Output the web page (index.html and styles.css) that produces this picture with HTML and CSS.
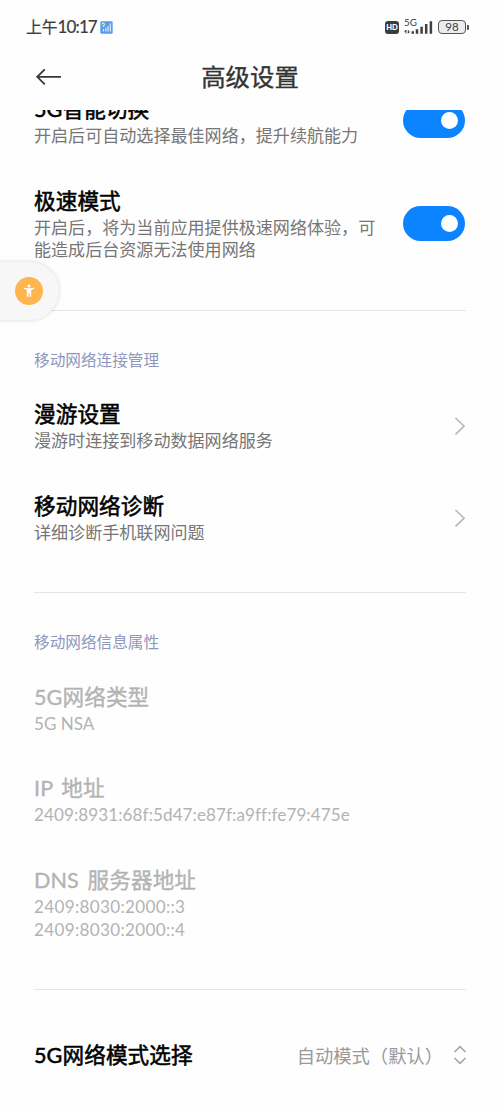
FILE: index.html
```html
<!DOCTYPE html>
<html lang="zh-CN">
<head>
<meta charset="utf-8">
<title>高级设置</title>
<link rel="stylesheet" href="styles.css">
</head>
<body>
<div class="phone">
  <div class="status">
    <span class="clock">上午<span class="clock-num">10:17</span></span>
    <svg class="sim" width="13" height="13" viewBox="0 0 13 13"><rect x=".3" y=".3" width="12.4" height="12.4" rx="1.2" fill="#5b9cec"/><path d="M1.8 3.4q.2-1.3 1.4-1.3t1.3 1.2q0 .9-1.2 1.7v1" fill="none" stroke="#e4ef9a" stroke-width="1.1"/><path d="M3.4 8v2.5M5.8 7v3.5M8 5v5.5M10.3 2.5v8" stroke="#e4f0ff" stroke-width="1.1"/></svg>
    <span class="spacer"></span>
    <span class="hd">HD</span>
    <span class="signal">
      <span class="net">5G</span>
      <svg width="29" height="16" viewBox="0 0 29 16"><path d="M1.900 14.500v-3M.8 12.600l1.100-1.400v1.400zM4.300 11v3M5.400 12.800l-1.100 1.400v-1.400z" stroke="#444" stroke-width=".9" fill="#444"/><path d="M8.800 12.300v2.400M13 10.300v4.400M17.600 7.800v6.900M22.200 5v9.700M26.900 2.200v12.500" stroke="#404040" stroke-width="2.5"/></svg>
    </span>
    <span class="battery"><span class="battery-body">98</span><span class="battery-tip"></span></span>
  </div>
  <header class="bar">
    <svg class="back" width="26" height="18" viewBox="0 0 26 18"><path d="M26 8.800H2M9.800 1.300L2.200 8.800l7.600 7.500" fill="none" stroke="#383838" stroke-width="1.8"/></svg>
    <h1 class="heading">高级设置</h1>
  </header>
  <main class="list">
    <div class="row row-first">
      <div class="text"><div class="title">5G智能切换</div><div class="desc">开启后可自动选择最佳网络，提升续航能力</div></div>
      <span class="toggle"></span>
    </div>
    <div class="row">
      <div class="text"><div class="title">极速模式</div><div class="desc">开启后，将为当前应用提供极速网络体验，可能造成后台资源无法使用网络</div></div>
      <span class="toggle"></span>
    </div>
    <hr class="rule">
    <h2 class="section">移动网络连接管理</h2>
    <div class="row">
      <div class="text"><div class="title">漫游设置</div><div class="desc">漫游时连接到移动数据网络服务</div></div>
      <svg class="chevron" width="12" height="18" viewBox="0 0 12 18"><path d="M1.500 1l8.600 8.200-8.600 8.200" fill="none" stroke="#b8b8b8" stroke-width="1.6"/></svg>
    </div>
    <div class="row">
      <div class="text"><div class="title">移动网络诊断</div><div class="desc">详细诊断手机联网问题</div></div>
      <svg class="chevron" width="12" height="18" viewBox="0 0 12 18"><path d="M1.500 1l8.600 8.200-8.600 8.200" fill="none" stroke="#b8b8b8" stroke-width="1.6"/></svg>
    </div>
    <hr class="rule">
    <h2 class="section">移动网络信息属性</h2>
    <div class="row disabled">
      <div class="text"><div class="title">5G网络类型</div><div class="desc">5G NSA</div></div>
    </div>
    <div class="row disabled">
      <div class="text"><div class="title wide-space">IP 地址</div><div class="desc ip">2409:8931:68f:5d47:e87f:a9ff:fe79:475e</div></div>
    </div>
    <div class="row disabled">
      <div class="text"><div class="title wide-space">DNS 服务器地址</div><div class="desc dns">2409:8030:2000::3<br>2409:8030:2000::4</div></div>
    </div>
    <hr class="rule">
    <div class="row row-select">
      <div class="title">5G网络模式选择</div>
      <span class="spacer"></span>
      <span class="value">自动模式（默认）</span>
      <svg class="updown" width="14" height="20" viewBox="0 0 14 20"><path d="M1.500 7L7 1.600 12.500 7M1.500 13L7 18.400l5.500-5.400" fill="none" stroke="#a6a6a6" stroke-width="1.6"/></svg>
    </div>
  </main>
  <div class="assist">
    <svg width="28" height="28" viewBox="0 0 28 28"><circle cx="14" cy="14" r="14" fill="#ffb54d"/><circle cx="14" cy="9" r="1.500" fill="#fff"/><path d="M9 10.700l3.300.6h3.400l3.300-.6v1.200l-2.800.8v7.100h-1.600v-3.500h-1.200v3.500h-1.600v-7.100L9 11.900z" fill="#fff"/></svg>
  </div>
</div>
</body>
</html>
```
FILE: styles.css
```css
* { box-sizing: border-box; }
body {
  margin: 0;
  background: #fefefe;
  font-family: Lato, "Noto Sans CJK SC", sans-serif;
  color: #000;
}
.phone {
  position: relative;
  width: 500px;
  height: 1111px;
  overflow: hidden;
  display: flex;
  flex-direction: column;
}
.spacer { flex: 1; }

.status {
  height: 54px;
  padding: 0 31px 0 26px;
  display: flex;
  align-items: center;
  color: #3c3c3c;
}
.clock { width: 70px; font-size: 15.800px; line-height: 24px; white-space: nowrap; -webkit-text-stroke: .2px currentColor; }
.clock-num { font-size: 17px; letter-spacing: -.9px; }
.sim { margin-left: 4px; }
.hd {
  width: 14px;
  height: 13px;
  border-radius: 3px;
  background: #3c3c3c;
  color: #fff;
  font-size: 7.500px;
  font-weight: 900;
  line-height: 13px;
  text-align: center;
}
.signal { position: relative; width: 29px; height: 16px; margin: 0 5px 0 5px; }
.signal svg { display: block; }
.net { position: absolute; left: 0; top: -2px; font-size: 9.800px; line-height: 10px; }
.battery { display: flex; align-items: center; }
.battery-body {
  width: 28px;
  height: 14px;
  border: 1.500px solid #555;
  border-radius: 4px;
  background: #ececec;
  font-size: 11.500px;
  line-height: 12.500px;
  text-align: center;
}
.battery-tip { width: 2px; height: 5px; margin-left: 1px; background: #555; border-radius: 0 1px 1px 0; }

.bar {
  height: 56px;
  flex: none;
  padding: 0 35px 10px;
  display: grid;
  grid-template-columns: 26px 1fr 26px;
  align-items: center;
}
.heading {
  margin: 0;
  text-align: center;
  font-size: 24.400px;
  line-height: 34px;
  font-weight: 400;
  -webkit-text-stroke: .35px #333;
  color: #333;
}

.list { flex: 1; overflow: hidden; padding: 0 34px; }
.row { display: flex; align-items: center; justify-content: space-between; padding: 19.500px 0; }
.row-first { margin-top: -35.500px; }
.text { width: 350px; }
.title {
  font-size: 21.600px;
  line-height: 30px;
  font-weight: 400;
  letter-spacing: .1px;
  white-space: nowrap;
  -webkit-text-stroke: .55px currentColor;
}
.wide-space { word-spacing: 3px; }
.disabled .title { -webkit-text-stroke-width: .35px; }
.desc { position: relative; top: 1px; font-size: 17.070px; line-height: 22.700px; color: #767676; }
.ip { letter-spacing: .09px; }
.dns { letter-spacing: .33px; }
.disabled .title, .disabled .desc { color: #b3b3b3; }
.toggle {
  flex: none;
  width: 62px;
  height: 34.500px;
  margin-right: 1px;
  border-radius: 18px;
  background: #0d84ff;
  display: flex;
  align-items: center;
  justify-content: flex-end;
  padding-right: 7px;
}
.toggle::after { content: ""; width: 17.500px; height: 17.500px; border-radius: 50%; background: #fff; }
.chevron { margin-top: 2px; }
.rule { height: 1px; margin: 29px 0; border: 0; background: #e4e4e4; }
.section { margin: 0; height: 40px; font-size: 15.650px; line-height: 40px; font-weight: 400; color: #8f97bd; }
.row-select { padding-top: 21.500px; }
.value { font-size: 18.300px; color: #999; white-space: nowrap; }
.updown { flex: none; margin-right: -1px; margin-left: 10px; }
.assist {
  position: absolute;
  left: -4px;
  top: 262px;
  width: 63px;
  height: 58px;
  padding: 15px 0 0 19px;
  border-radius: 0 29px 29px 0;
  background: #f7f7f7;
  box-shadow: 0 0 4px rgba(0,0,0,.16);
}
.assist svg { display: block; }
```
